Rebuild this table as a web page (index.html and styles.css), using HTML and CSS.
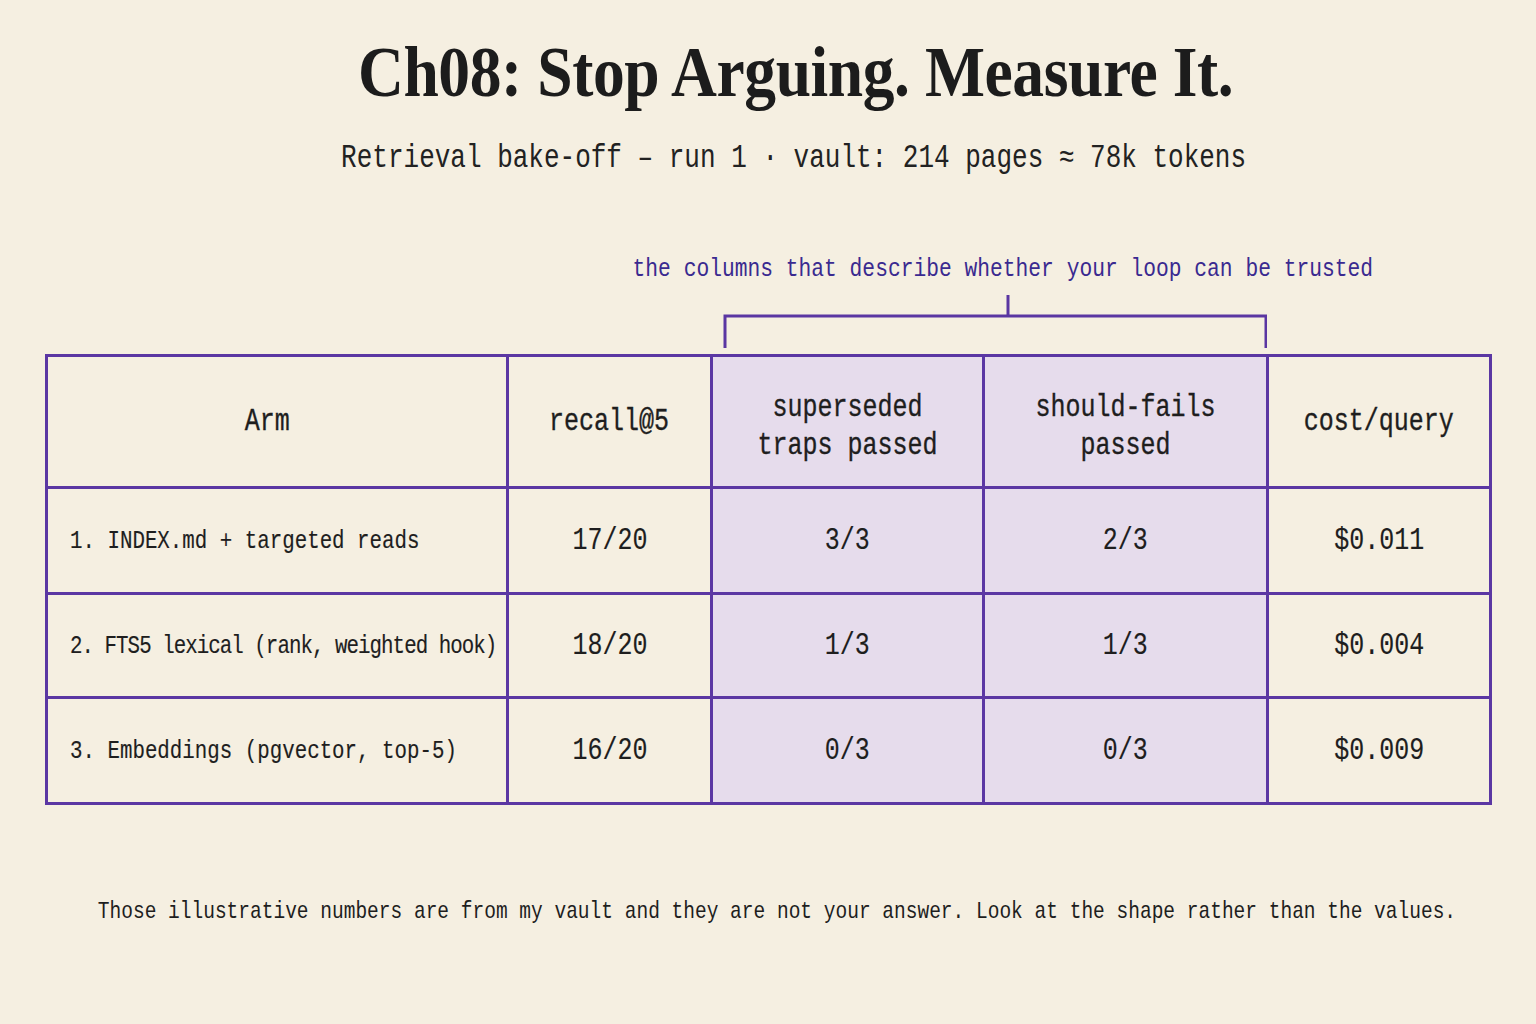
FILE: index.html
```html
<!DOCTYPE html>
<html lang="en">
<head>
<meta charset="utf-8">
<title>Ch08: Stop Arguing. Measure It.</title>
<link rel="stylesheet" href="styles.css">
</head>
<body>
<main class="page">
  <header class="head">
    <h1 class="title">Ch08: Stop Arguing. Measure It.</h1>
    <p class="subtitle"><span class="sq">Retrieval bake-off – run 1 · vault: 214 pages ≈ 78k tokens</span></p>
  </header>

  <section class="board">
    <div class="annot">
      <div class="annot-col">
        <p class="annot-text"><span class="sq">the columns that describe whether your loop can be trusted</span></p>
        <svg class="bracket" width="556" height="56" viewBox="0 0 556 56" aria-hidden="true">
          <path d="M297 2 V23" />
          <path d="M14 55 V23 H555 V55" />
        </svg>
      </div>
    </div>

    <table class="grid">
      <colgroup>
        <col class="c-arm">
        <col class="c-recall">
        <col class="c-sup">
        <col class="c-fail">
        <col class="c-cost">
      </colgroup>
      <thead>
        <tr>
          <th class="h-arm"><span class="sq">Arm</span></th>
          <th><span class="sq">recall@5</span></th>
          <th class="hl h-two"><span class="sq">superseded<br>traps passed</span></th>
          <th class="hl h-two"><span class="sq">should-fails<br>passed</span></th>
          <th><span class="sq">cost/query</span></th>
        </tr>
      </thead>
      <tbody>
        <tr class="r1">
          <td class="arm"><span class="sq sq-left">1. INDEX.md + targeted reads</span></td>
          <td><span class="sq">17/20</span></td>
          <td class="hl"><span class="sq">3/3</span></td>
          <td class="hl"><span class="sq">2/3</span></td>
          <td><span class="sq">$0.011</span></td>
        </tr>
        <tr class="r2">
          <td class="arm tight"><span class="sq sq-left">2. FTS5 lexical (rank, weighted hook)</span></td>
          <td><span class="sq">18/20</span></td>
          <td class="hl"><span class="sq">1/3</span></td>
          <td class="hl"><span class="sq">1/3</span></td>
          <td><span class="sq">$0.004</span></td>
        </tr>
        <tr class="r3">
          <td class="arm"><span class="sq sq-left">3. Embeddings (pgvector, top-5)</span></td>
          <td><span class="sq">16/20</span></td>
          <td class="hl"><span class="sq">0/3</span></td>
          <td class="hl"><span class="sq">0/3</span></td>
          <td><span class="sq">$0.009</span></td>
        </tr>
      </tbody>
    </table>
  </section>

  <p class="note"><span class="sq">Those illustrative numbers are from my vault and they are not your answer. Look at the shape rather than the values.</span></p>
</main>
</body>
</html>
```

FILE: styles.css
```css
html, body {
  margin: 0;
  padding: 0;
}

body {
  background: #f5efe1;
  color: #1e1e1e;
  width: 1536px;
  height: 1024px;
  overflow: hidden;
  font-family: "Liberation Mono", "DejaVu Sans Mono", monospace;
}

/* narrow monospace look: glyphs drawn tall, then condensed */
.sq {
  display: inline-block;
  transform: scaleX(0.8);
  transform-origin: 50% 50%;
  white-space: nowrap;
}

.sq-left {
  transform-origin: 0 50%;
}

.page {
  display: flex;
  flex-direction: column;
  align-items: stretch;
}

.head {
  display: flex;
  flex-direction: column;
  align-items: center;
  padding-left: 56px;
}

.title {
  margin: 32px 0 0 0;
  font-family: "Liberation Serif", "Times New Roman", serif;
  font-weight: 700;
  font-size: 72px;
  line-height: 80px;
  letter-spacing: -0.5px;
  color: #1c1c1c;
  white-space: nowrap;
  transform: scaleX(0.883);
}

.subtitle {
  margin: 29px 0 0 0;
  font-size: 32.5px;
  line-height: 36px;
  color: #222;
  display: flex;
  justify-content: center;
  width: 1000px;
  padding-right: 4px;
}

.board {
  margin: 0 0 0 45px;
  width: 1444px;
  display: flex;
  flex-direction: column;
}

.annot {
  display: grid;
  grid-template-columns: 666px 556px 222px;
  margin-top: 77px;
}

.annot-col {
  grid-column: 2;
  display: flex;
  flex-direction: column;
  align-items: center;
}

.annot-text {
  margin: 0 -213px 0 -186px;
  font-size: 26.6px;
  line-height: 30px;
  color: #3a2a90;
  white-space: nowrap;
}

.bracket {
  display: block;
  align-self: flex-start;
  margin-top: 9px;
  fill: none;
  stroke: #5a36a2;
  stroke-width: 3;
}

.grid {
  border-collapse: collapse;
  table-layout: fixed;
  width: 1444px;
  margin-top: 5px;
}

.c-arm { width: 461px; }
.c-recall { width: 204px; }
.c-sup { width: 272px; }
.c-fail { width: 284px; }
.c-cost { width: 223px; }

.grid th,
.grid td {
  border: 3px solid #5b37a3;
  text-align: center;
  vertical-align: middle;
  padding: 0;
  color: #1e1e1e;
}

.grid th {
  height: 129px;
  font-size: 31.25px;
  line-height: 38px;
  font-weight: 400;
  -webkit-text-stroke: 0.35px #1e1e1e;
}

.grid th.h-arm {
  padding-right: 20px;
}

.grid th.h-two .sq {
  transform: translateY(5px) scaleX(0.8);
}

.grid td {
  font-size: 31.25px;
  line-height: 34px;
  -webkit-text-stroke: 0.15px #1e1e1e;
}

.r1 td { height: 103px; }
.r2 td { height: 101px; }
.r3 td { height: 103px; }

.grid td.arm {
  text-align: left;
  padding-left: 22px;
  font-size: 26px;
  white-space: nowrap;
}

.grid td.tight {
  letter-spacing: -1.2px;
}

.hl {
  background: #e6dcec;
}

.note {
  margin: 93px 0 0 0;
  font-size: 24.4px;
  line-height: 28px;
  display: flex;
  justify-content: center;
  padding-left: 17px;
  color: #1e1e1e;
}
```
